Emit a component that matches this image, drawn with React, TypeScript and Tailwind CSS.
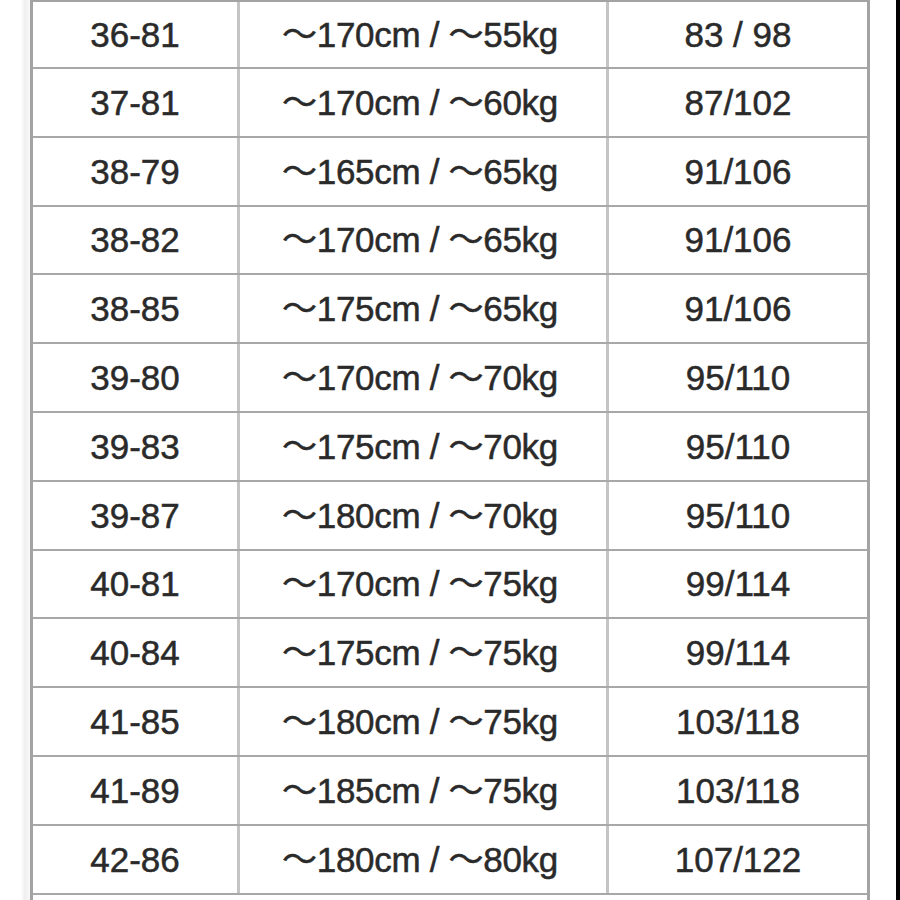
import React from "react";

const rows: [string, string, string][] = [
  ["36-81", "～170cm / ～55kg", "83 / 98"],
  ["37-81", "～170cm / ～60kg", "87/102"],
  ["38-79", "～165cm / ～65kg", "91/106"],
  ["38-82", "～170cm / ～65kg", "91/106"],
  ["38-85", "～175cm / ～65kg", "91/106"],
  ["39-80", "～170cm / ～70kg", "95/110"],
  ["39-83", "～175cm / ～70kg", "95/110"],
  ["39-87", "～180cm / ～70kg", "95/110"],
  ["40-81", "～170cm / ～75kg", "99/114"],
  ["40-84", "～175cm / ～75kg", "99/114"],
  ["41-85", "～180cm / ～75kg", "103/118"],
  ["41-89", "～185cm / ～75kg", "103/118"],
  ["42-86", "～180cm / ～80kg", "107/122"],
];

export default function App() {
  return (
    <div
      className="flex h-[900px] w-[900px] overflow-hidden bg-white text-[#2a2a2a]"
      style={{ fontFamily: '"Liberation Sans", "Noto Sans CJK JP", Arial, sans-serif' }}
    >
      <div className="w-[30px] shrink-0 flex">
        <div className="w-[21px]" />
        <div className="w-[7px] bg-gradient-to-r from-white via-[#efefef] to-[#f4f4f4]" />
        <div className="w-[2px] bg-[#f7f7f7]" />
      </div>
      <div className="w-[840px] shrink-0 border-l-[3px] border-r-[3px] border-t-2 border-[#a3a3a3] h-[910px]">
        {rows.map((r, i) => (
          <div
            key={i}
            className={`grid grid-cols-[207px_369px_258px] border-b-2 border-[#a8a8a8] ${i === 0 ? "h-[67px]" : "h-[68.8px]"}`}
          >
            <div className="flex items-center justify-center border-r-[3px] border-[#c4c4c4] text-[35px] leading-none [-webkit-text-stroke:0.5px_#2a2a2a]">
              {r[0]}
            </div>
            <div className="flex items-center justify-center border-r-[3px] border-[#c4c4c4] text-[35px] leading-none tracking-[-0.3px] [-webkit-text-stroke:0.5px_#2a2a2a] -ml-[6px]">
              {r[1]}
            </div>
            <div className="flex items-center justify-center text-[35px] leading-none [-webkit-text-stroke:0.5px_#2a2a2a]">
              {r[2]}
            </div>
          </div>
        ))}
      </div>
      <div className="w-[26px] shrink-0" />
      <div className="w-[4px] shrink-0 bg-black" />
    </div>
  );
}
